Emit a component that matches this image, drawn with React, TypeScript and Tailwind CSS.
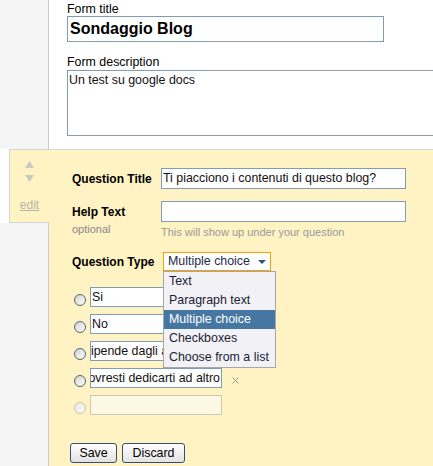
const YELLOW = 'bg-[#fff3c4]'

function Radio({ disabled = false }: { disabled?: boolean }) {
  return (
    <div
      className={
        disabled
          ? 'mt-[7px] h-[12px] w-[12px] shrink-0 rounded-full border border-[#c4c2b2] bg-linear-to-br from-[#ecebe2] to-[#fbfaf4]'
          : 'mt-[7px] h-[12px] w-[12px] shrink-0 rounded-full border border-[#4f6579] bg-linear-to-br from-[#d2d2cc] to-white'
      }
    />
  )
}

function OptionRow({ children, remove = false }: { children?: React.ReactNode; remove?: boolean }) {
  return (
    <div className="flex h-[20px] items-start gap-[4px]">
      <Radio />
      <div className="flex h-[20px] w-[132px] items-center overflow-hidden whitespace-nowrap border border-[#7f9db9] bg-white px-[1px] text-[#111]">
        {children}
      </div>
      {remove && (
        <svg className="ml-[6px] mt-[9px]" width="7" height="7" viewBox="0 0 7 7">
          <path d="M0.5 0.5L6.5 6.5M6.5 0.5L0.5 6.5" stroke="#9a9a9a" strokeWidth="1" />
        </svg>
      )}
    </div>
  )
}

export default function App() {
  const tipi = ['Text', 'Paragraph text', 'Multiple choice', 'Checkboxes', 'Choose from a list']

  return (
    <div className="flex h-[466px] w-[433px] flex-col overflow-hidden font-['Liberation_Sans',Arial,sans-serif] text-[12.4px] text-black">
      {/* intestazione del modulo */}
      <div className="flex h-[149px] shrink-0">
        <div className="w-[49px] shrink-0 border-r border-[#cccccc] bg-[#f5f5f5]" />
        <div className="flex-1 bg-white pl-[18px] pt-[2px]">
          <div className="leading-[14px]">Form title</div>
          <div className="flex h-[26px] w-[317px] items-center border border-[#7f9db9] pl-[2px] text-[16px] font-bold">
            Sondaggio Blog
          </div>
          <div className="mt-[13px] leading-[14px]">Form description</div>
          <div className="mt-[1px] h-[66px] w-[380px] border border-[#7f9db9] pl-[1px] pt-[2px] leading-[14px] text-[#111]">
            Un test su google docs
          </div>
        </div>
      </div>

      {/* domanda in modifica */}
      <div className="flex flex-1">
        <div className="flex w-[49px] shrink-0 flex-col">
          <div className={`ml-[9px] flex h-[74px] flex-col items-center border-b border-l border-t border-[#d4d4d4] pt-[11px] ${YELLOW}`}>
            <svg width="9" height="7" viewBox="0 0 9 7">
              <path d="M4.5 0L9 7H0Z" fill="#c9c9c0" />
            </svg>
            <svg className="mt-[7px]" width="9" height="7" viewBox="0 0 9 7">
              <path d="M0 0H9L4.5 7Z" fill="#c9c9c0" />
            </svg>
            <div className="mt-[16px] text-[12px] leading-[14px] text-[#b5b5b0] underline">edit</div>
          </div>
          <div className="flex-1 border-r border-[#cccccc] bg-[#f5f5f5]" />
        </div>

        <div className={`flex-1 border-t border-[#d8d8d8] pl-[23px] pt-[18px] ${YELLOW}`}>
          <div className="flex h-[21px]">
            <div className="flex w-[89px] items-center text-[12px] font-bold">Question Title</div>
            <div className="flex h-[21px] w-[245px] items-center border border-[#7f9db9] bg-white px-[1px] text-[#111]">
              Ti piacciono i contenuti di questo blog?
            </div>
          </div>

          <div className="mt-[12px] flex">
            <div className="w-[89px]">
              <div className="flex h-[21px] items-center text-[12px] font-bold">Help Text</div>
              <div className="text-[11px] leading-[14px] text-[#888]">optional</div>
            </div>
            <div>
              <div className="h-[21px] w-[245px] border border-[#7f9db9] bg-white" />
              <div className="mt-[3px] text-[11px] leading-[14px] text-[#999]">This will show up under your question</div>
            </div>
          </div>

          <div className="mt-[13px] flex h-[19px]">
            <div className="flex w-[89px] items-center text-[12px] font-bold">Question Type</div>
            <div className="relative ml-[2px]">
              <div className="flex h-[19px] w-[108px] items-center justify-between border border-[#f5a300] bg-white pl-[4px] pr-[4px] text-[#1f2a4a]">
                <span>Multiple choice</span>
                <svg width="8" height="4" viewBox="0 0 8 4">
                  <path d="M0 0H8L4 4Z" fill="#2f4f80" />
                </svg>
              </div>
              <div className="absolute left-0 top-[19px] z-10 w-[113px] border border-[#a6a6ac] bg-[#f2f2f6]">
                {tipi.map((t) => (
                  <div
                    key={t}
                    className={
                      t === 'Multiple choice'
                        ? 'flex h-[19px] items-center bg-[#4677a3] pl-[5px] whitespace-nowrap text-white'
                        : 'flex h-[19px] items-center pl-[5px] whitespace-nowrap text-[#1c1c38]'
                    }
                  >
                    {t}
                  </div>
                ))}
              </div>
            </div>
          </div>

          <div className="ml-[2px] mt-[16px] flex flex-col gap-[7px]">
            <OptionRow>Si</OptionRow>
            <OptionRow>No</OptionRow>
            <OptionRow>
              <span className="-ml-[10px]">Dipende dagli argomenti</span>
            </OptionRow>
            <OptionRow remove>
              <span className="flex w-full justify-end">
                <span>Dovresti dedicarti ad altro</span>
              </span>
            </OptionRow>
            <div className="flex h-[20px] items-start gap-[4px]">
              <Radio disabled />
              <div className="h-[20px] w-[132px] border border-[#ccc8b6] bg-[#fdf8e4]" />
            </div>
          </div>

          <div className="-ml-[2px] mt-[28px] flex gap-[5px]">
            <button className="flex h-[20px] w-[47px] items-center justify-center rounded-[3px] border border-[#35506f] bg-linear-to-b from-white to-[#e2e2e2] text-[12.4px] leading-none">
              Save
            </button>
            <button className="flex h-[20px] w-[63px] items-center justify-center rounded-[3px] border border-[#35506f] bg-linear-to-b from-white to-[#e2e2e2] text-[12.4px] leading-none">
              Discard
            </button>
          </div>
        </div>
      </div>
    </div>
  )
}
